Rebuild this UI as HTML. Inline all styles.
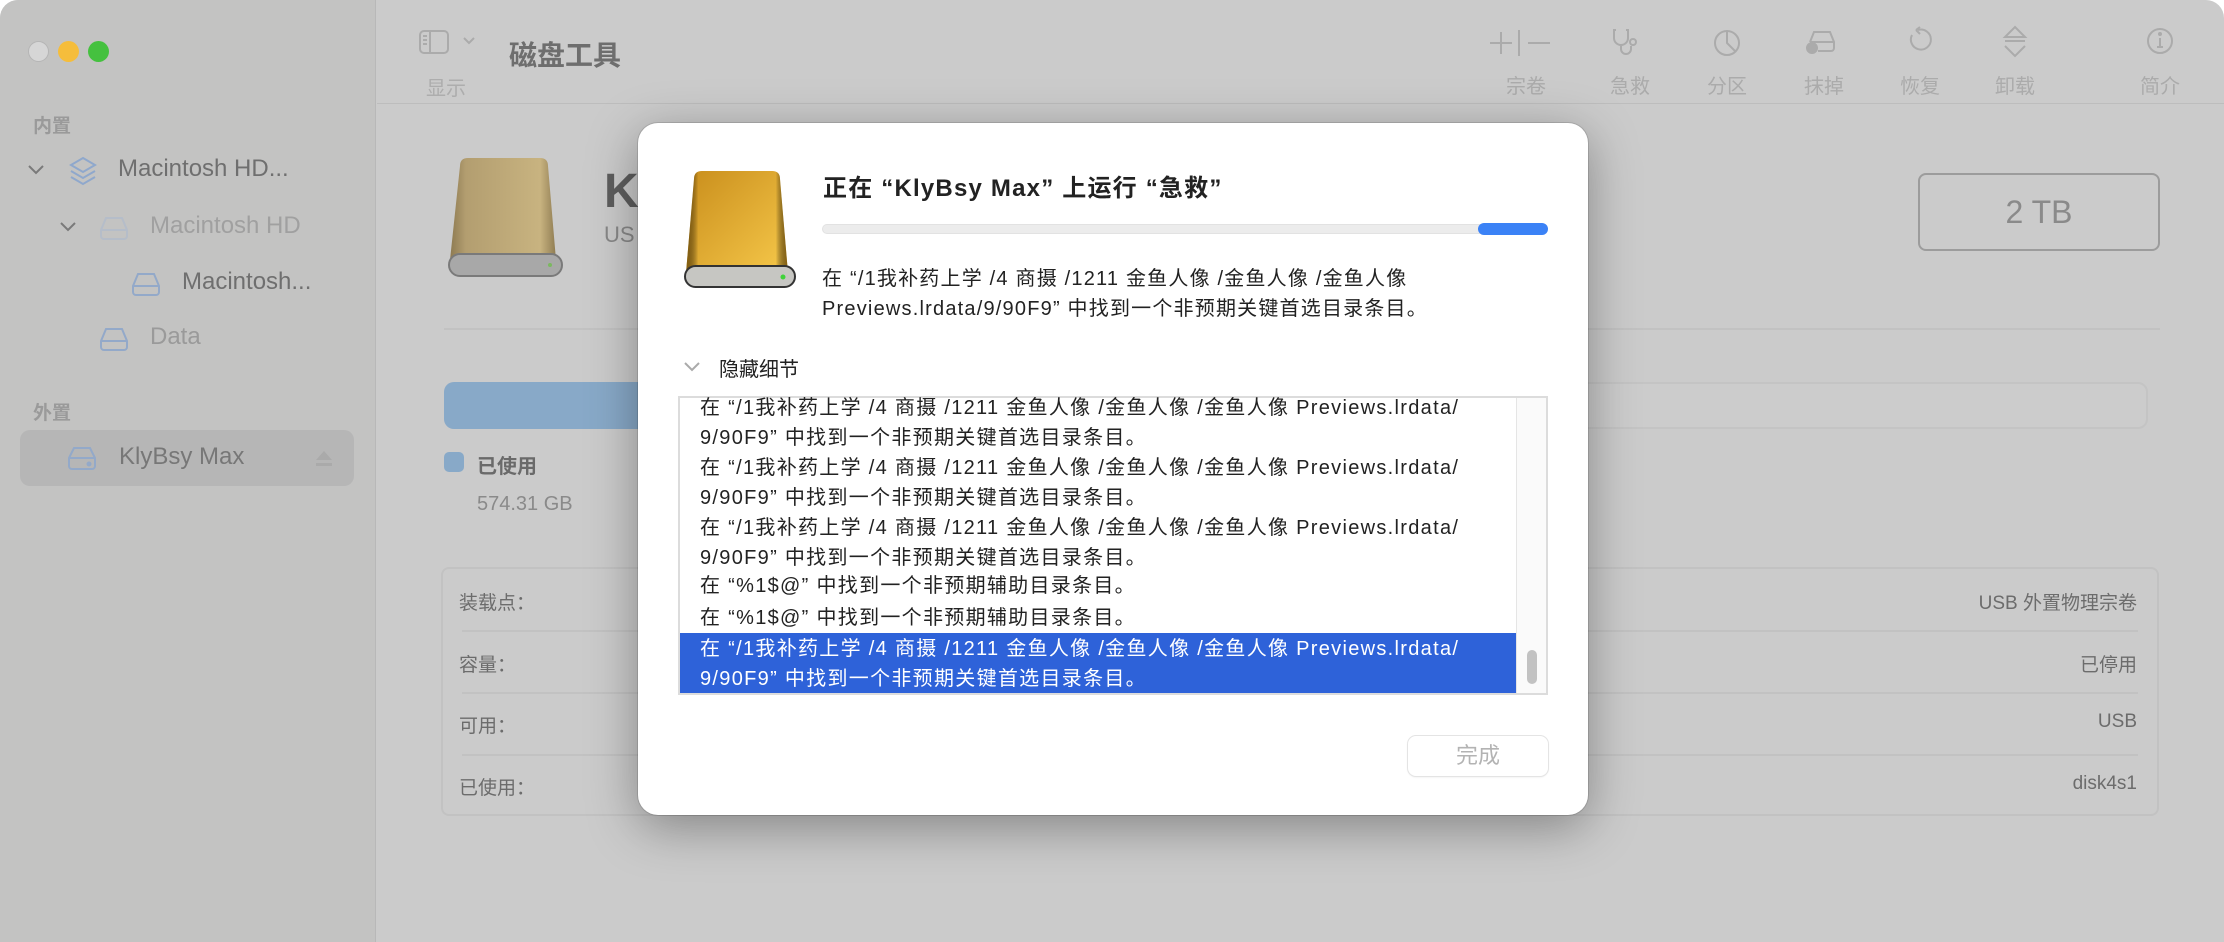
<!DOCTYPE html>
<html><head><meta charset="utf-8"><style>
*{margin:0;padding:0;box-sizing:border-box}
body{width:2224px;height:942px;overflow:hidden;background:#fff;font-family:"Liberation Sans","Noto Sans CJK SC",sans-serif;position:relative}
.a{position:absolute;white-space:nowrap}
#win{position:absolute;left:0;top:0;width:2224px;height:942px;border-radius:18px 18px 0 0;overflow:hidden;background:#cbcbcb}
#side{position:absolute;left:0;top:0;width:376px;height:942px;background:#c3c3c2;border-right:1px solid #b8b8b8}
.tl{position:absolute;top:41px;width:21px;height:21px;border-radius:50%}
.sh{font-size:19px;color:#9a9a9a;font-weight:bold}
.si{font-size:24px;color:#6f6f6f}
.tb{font-size:20px;color:#ababab;text-align:center;width:80px}
.lst{position:absolute;left:700px;font-size:20px;color:#222;line-height:30px;letter-spacing:1.3px}
.row{position:absolute;left:459px;font-size:19px;color:#6c6c6c}
.rv{position:absolute;right:87px;font-size:19px;color:#6c6c6c}
</style></head><body>
<div id="win">
<div id="side">
 <div class="tl" style="left:28px;background:#d6d6d6;border:1px solid #b5b5b5"></div>
 <div class="tl" style="left:58px;background:#f5bd3b"></div>
 <div class="tl" style="left:88px;background:#45c13f"></div>
 <div class="a sh" style="left:33px;top:111px">内置</div>
 <svg class="a" style="left:26px;top:162px" width="20" height="16"><path d="M3 4l7 7 7-7" fill="none" stroke="#7a7a7a" stroke-width="2"/></svg>
 <svg class="a" style="left:68px;top:155px" width="30" height="32" fill="none" stroke="#8fa8cc" stroke-width="2"><path d="M15 3l12 7-12 7-12-7z"/><path d="M3 16l12 7 12-7"/><path d="M3 22l12 7 12-7"/></svg>
 <div class="a si" style="left:118px;top:155px">Macintosh HD...</div>
 <svg class="a" style="left:58px;top:219px" width="20" height="16"><path d="M3 4l7 7 7-7" fill="none" stroke="#7a7a7a" stroke-width="2"/></svg>
 <svg class="a" style="left:98px;top:214px" width="32" height="28" fill="none" stroke="#b5bdc9" stroke-width="2"><path d="M3 16l5-12h16l5 12v6a3 3 0 0 1-3 3H6a3 3 0 0 1-3-3z"/><path d="M3 16h26"/></svg>
 <div class="a si" style="left:150px;top:212px;color:#a0a0a0">Macintosh HD</div>
 <svg class="a" style="left:130px;top:270px" width="32" height="28" fill="none" stroke="#93a9c9" stroke-width="2"><path d="M3 16l5-12h16l5 12v6a3 3 0 0 1-3 3H6a3 3 0 0 1-3-3z"/><path d="M3 16h26"/></svg>
 <div class="a si" style="left:182px;top:268px">Macintosh...</div>
 <svg class="a" style="left:98px;top:325px" width="32" height="28" fill="none" stroke="#93a9c9" stroke-width="2"><path d="M3 16l5-12h16l5 12v6a3 3 0 0 1-3 3H6a3 3 0 0 1-3-3z"/><path d="M3 16h26"/></svg>
 <div class="a si" style="left:150px;top:323px;color:#9a9a9a">Data</div>
 <div class="a sh" style="left:33px;top:398px">外置</div>
 <div class="a" style="left:20px;top:430px;width:334px;height:56px;border-radius:10px;background:#b6b6b6"></div>
 <svg class="a" style="left:66px;top:444px" width="32" height="28" fill="none" stroke="#93a9c9" stroke-width="2"><path d="M3 14l5-10h16l5 10v8a3 3 0 0 1-3 3H6a3 3 0 0 1-3-3z"/><path d="M3 14h26"/><circle cx="23" cy="20" r="1.5" fill="#93a9c9"/></svg>
 <div class="a si" style="left:119px;top:443px;color:#777">KlyBsy Max</div>
 <svg class="a" style="left:314px;top:449px" width="20" height="18"><path d="M10 2l8 9H2z M2 14h16v3H2z" fill="#aaa"/></svg>
</div>
<div class="a" style="left:377px;top:103px;width:1847px;height:1px;background:#bdbdbd"></div>
<svg class="a" style="left:419px;top:30px" width="60" height="26" fill="none" stroke="#ababab" stroke-width="2"><rect x="1" y="1" width="28" height="22" rx="4"/><path d="M11 1v22M4 6h4M4 10h4M4 14h4"/><path d="M45 8l5 5 5-5"/></svg>
<div class="a" style="left:426px;top:72px;font-size:20px;color:#adadad">显示</div>
<div class="a" style="left:509px;top:34px;font-size:28px;font-weight:bold;color:#6e6e6e">磁盘工具</div>
<svg class="a" style="left:1488px;top:26px" width="80" height="32" fill="none" stroke="#ababab" stroke-width="2"><path d="M13 6v22M2 17h22M31 4v26M40 17h22"/></svg>
<div class="a tb" style="left:1486px;top:70px">宗卷</div>
<svg class="a" style="left:1610px;top:26px" width="40" height="32" fill="none" stroke="#ababab" stroke-width="2"><path d="M6 4h-2v8a7 7 0 0 0 14 0V4h-2M11 19v4a5 5 0 0 0 10 0v-3"/><circle cx="23" cy="16" r="3"/></svg>
<div class="a tb" style="left:1590px;top:70px">急救</div>
<svg class="a" style="left:1710px;top:26px" width="34" height="32" fill="none" stroke="#ababab" stroke-width="2"><circle cx="17" cy="17" r="12"/><path d="M17 5v12l8 8"/></svg>
<div class="a tb" style="left:1687px;top:70px">分区</div>
<svg class="a" style="left:1804px;top:28px" width="40" height="30" fill="none" stroke="#ababab" stroke-width="2"><path d="M6 14l4-10h16l4 10v6a3 3 0 0 1-3 3H14"/><path d="M6 14h24"/><circle cx="8" cy="20" r="5" fill="#ababab"/></svg>
<div class="a tb" style="left:1784px;top:70px">抹掉</div>
<svg class="a" style="left:1906px;top:24px" width="30" height="36" fill="none" stroke="#ababab" stroke-width="2"><path d="M10 6l4-3M10 6l4 4"/><path d="M12 6a10 10 0 1 1-6 5"/></svg>
<div class="a tb" style="left:1880px;top:70px">恢复</div>
<svg class="a" style="left:2000px;top:24px" width="30" height="36" fill="none" stroke="#ababab" stroke-width="2"><path d="M15 3l10 10H5zM5 17h20M5 22l10 10 10-10"/></svg>
<div class="a tb" style="left:1975px;top:70px">卸载</div>
<svg class="a" style="left:2144px;top:24px" width="32" height="34" fill="none" stroke="#ababab" stroke-width="2"><circle cx="16" cy="17" r="12"/><path d="M16 14v9M13 23h6"/><circle cx="16" cy="10" r="1" fill="#ababab"/></svg>
<div class="a tb" style="left:2120px;top:70px">简介</div>
<svg class="a" style="left:446px;top:156px" width="120" height="124"><defs><linearGradient id="g1" x1="0" x2="1"><stop offset="0" stop-color="#8d7a52"/><stop offset=".15" stop-color="#b39e70"/><stop offset=".85" stop-color="#c8b380"/><stop offset="1" stop-color="#8f7c52"/></linearGradient></defs><path d="M14 10q0-8 8-8h72q8 0 8 8l8 94H4z" fill="url(#g1)"/><rect x="3" y="98" width="113" height="22" rx="11" fill="#a8a8a8" stroke="#7a7a7a" stroke-width="2"/><circle cx="104" cy="109" r="2" fill="#7bb860"/></svg>
<div class="a" style="left:604px;top:164px;font-size:48px;font-weight:bold;color:#5e5e5e">Kl</div>
<div class="a" style="left:604px;top:222px;font-size:22px;color:#888">US</div>
<div class="a" style="left:444px;top:328px;width:1716px;height:2px;background:#c2c2c2"></div>
<div class="a" style="left:444px;top:382px;width:1704px;height:47px;border-radius:10px;border:2px solid #c4c4c4;background:#cccccc"></div>
<div class="a" style="left:444px;top:382px;width:400px;height:47px;border-radius:10px;background:#88a9c8"></div>
<div class="a" style="left:444px;top:452px;width:20px;height:20px;border-radius:5px;background:#88a9c8"></div>
<div class="a" style="left:477px;top:450px;font-size:20px;font-weight:bold;color:#6a6a6a">已使用</div>
<div class="a" style="left:477px;top:493px;font-size:20px;color:#8a8a8a">574.31 GB</div>
<div class="a" style="left:441px;top:567px;width:1718px;height:249px;border:2px solid #c2c2c2;border-radius:8px"></div>
<div class="a" style="left:462px;top:630px;width:1676px;height:2px;background:#c2c2c2"></div>
<div class="a" style="left:462px;top:692px;width:1676px;height:2px;background:#c2c2c2"></div>
<div class="a" style="left:462px;top:754px;width:1676px;height:2px;background:#c2c2c2"></div>
<div class="row" style="top:588px">装载点：</div><div class="rv" style="top:588px">USB 外置物理宗卷</div>
<div class="row" style="top:650px">容量：</div><div class="rv" style="top:650px">已停用</div>
<div class="row" style="top:711px">可用：</div><div class="rv" style="top:711px">USB</div>
<div class="row" style="top:773px">已使用：</div><div class="rv" style="top:773px">disk4s1</div>
<div class="a" style="left:1918px;top:173px;width:242px;height:78px;border:2px solid #9c9c9c;border-radius:8px;font-size:32px;color:#8a8a8a;text-align:center;line-height:74px">2 TB</div>
</div>
<div class="a" style="left:638px;top:123px;width:950px;height:692px;background:#fff;border-radius:20px;box-shadow:0 12px 50px rgba(0,0,0,.35),0 0 0 1px rgba(0,0,0,.12)">
 <svg class="a" style="left:44px;top:46px" width="120" height="120"><defs><linearGradient id="g2" x1="0" x2="1" y1="0" y2="1"><stop offset="0" stop-color="#c98e1c"/><stop offset="1" stop-color="#f6c84a"/></linearGradient><linearGradient id="g3" x1="0" x2="1"><stop offset="0" stop-color="#8a6210"/><stop offset=".12" stop-color="rgba(0,0,0,0)"/><stop offset=".88" stop-color="rgba(0,0,0,0)"/><stop offset="1" stop-color="#8a6210"/></linearGradient></defs><path d="M12 10q0-8 8-8h70q8 0 8 8l8 94H4z" fill="url(#g2)"/><path d="M12 10q0-8 8-8h70q8 0 8 8l8 94H4z" fill="url(#g3)"/><rect x="3" y="97" width="110" height="21" rx="10.5" fill="#c6c6c2" stroke="#333" stroke-width="2"/><circle cx="101" cy="108" r="2.5" fill="#3fd23a"/></svg>
 <div class="a" style="left:185px;top:45px;font-size:24px;font-weight:bold;color:#222;letter-spacing:1.2px">正在 “KlyBsy Max” 上运行 “急救”</div>
 <div class="a" style="left:184px;top:101px;width:726px;height:10px;border-radius:5px;background:#ececec;border:1px solid #e2e2e2"></div>
 <div class="a" style="left:840px;top:100px;width:70px;height:12px;border-radius:6px;background:#3b82f6"></div>
 <div class="a" style="left:184px;top:141px;font-size:20px;color:#222;line-height:30px;letter-spacing:1.2px">在 “/1我补药上学 /4 商摄 /1211 金鱼人像 /金鱼人像 /金鱼人像<br>Previews.lrdata/9/90F9” 中找到一个非预期关键首选目录条目。</div>
 <svg class="a" style="left:44px;top:236px" width="20" height="14"><path d="M3 4l7 7 7-7" fill="none" stroke="#aaa" stroke-width="2"/></svg>
 <div class="a" style="left:81px;top:230px;font-size:20px;color:#222">隐藏细节</div>
 <div class="a" style="left:40px;top:273px;width:870px;height:299px;border:2px solid #dcdcdc;overflow:hidden;background:#fff">
  <div class="a" style="left:0;top:235px;width:836px;height:62px;background:#2e62d9"></div>
  <div class="a" style="left:836px;top:0;width:30px;height:297px;background:#fafafa;border-left:1px solid #e5e5e5"></div>
  <div class="a" style="left:847px;top:252px;width:10px;height:34px;border-radius:5px;background:#c2c2c2"></div>
 </div>
 <div class="lst" style="top:270px;left:62px">在 “/1我补药上学 /4 商摄 /1211 金鱼人像 /金鱼人像 /金鱼人像 Previews.lrdata/<br>9/90F9” 中找到一个非预期关键首选目录条目。</div>
 <div class="lst" style="top:330px;left:62px">在 “/1我补药上学 /4 商摄 /1211 金鱼人像 /金鱼人像 /金鱼人像 Previews.lrdata/<br>9/90F9” 中找到一个非预期关键首选目录条目。</div>
 <div class="lst" style="top:390px;left:62px">在 “/1我补药上学 /4 商摄 /1211 金鱼人像 /金鱼人像 /金鱼人像 Previews.lrdata/<br>9/90F9” 中找到一个非预期关键首选目录条目。</div>
 <div class="lst" style="top:448px;left:62px">在 “%1$@” 中找到一个非预期辅助目录条目。</div>
 <div class="lst" style="top:480px;left:62px">在 “%1$@” 中找到一个非预期辅助目录条目。</div>
 <div class="lst" style="top:511px;left:62px;color:#fff">在 “/1我补药上学 /4 商摄 /1211 金鱼人像 /金鱼人像 /金鱼人像 Previews.lrdata/<br>9/90F9” 中找到一个非预期关键首选目录条目。</div>
 <div class="a" style="left:770px;top:613px;width:140px;height:40px;border-radius:8px;background:#fff;box-shadow:0 0 0 1px #e4e4e4,0 1px 2px rgba(0,0,0,.1);font-size:22px;color:#b3b3b3;text-align:center;line-height:40px">完成</div>
</div>
</body></html>
